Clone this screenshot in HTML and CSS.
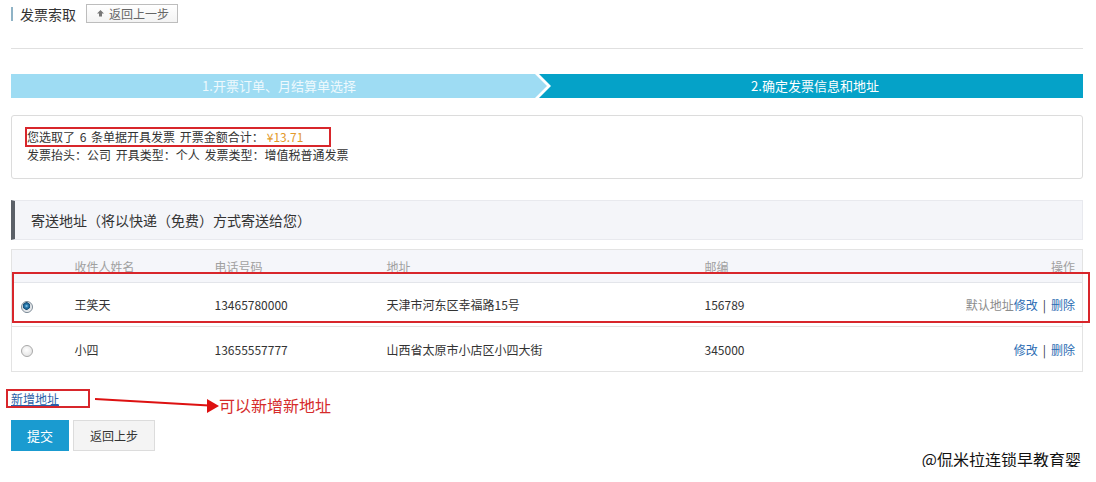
FILE: index.html
```html
<!DOCTYPE html>
<html lang="zh-CN">
<head>
    <meta charset="UTF-8">
    <title>发票索取</title>
    <link rel="stylesheet" href="styles.css">
</head>
<body>
    <div class="page">
        <div class="page-head">
            <span class="head-mark"></span>
            <h2 class="head-title">发票索取</h2>
            <a href="javascript:;" class="head-back">
                <svg width="9" height="9" viewBox="0 0 9 9"><path d="M4.5 1 L1 4.5 H3 V7.5 H6 V4.5 H8 Z" fill="#777"/></svg>
                返回上一步
            </a>
        </div>
        <div class="line"></div>

        <!-- 步骤条 -->
        <div class="steps">
            <div class="step step-done">1.开票订单、月结算单选择</div>
            <div class="step step-on">2.确定发票信息和地址</div>
        </div>

        <div class="info">
            <div class="info-line"><span class="mark">您选取了 6 条单据开具发票 开票金额合计：<em class="money">¥13.71</em></span></div>
            <div class="info-line">发票抬头：公司 开具类型：个人 发票类型：增值税普通发票</div>
        </div>

        <div class="sec-title">寄送地址（将以快递（免费）方式寄送给您）</div>

        <div class="addr-wrap">
            <table class="addr-table">
                <colgroup>
                    <col style="width:63px">
                    <col style="width:140px">
                    <col style="width:172px">
                    <col style="width:318px">
                    <col style="width:200px">
                    <col>
                </colgroup>
                <thead>
                    <tr>
                        <th></th>
                        <th>收件人姓名</th>
                        <th>电话号码</th>
                        <th>地址</th>
                        <th>邮编</th>
                        <th class="op">操作</th>
                    </tr>
                </thead>
                <tbody>
                    <tr>
                        <td><span class="radio checked"></span></td>
                        <td>王笑天</td>
                        <td>13465780000</td>
                        <td>天津市河东区幸福路15号</td>
                        <td>156789</td>
                        <td class="op"><span class="def">默认地址</span><a href="javascript:;">修改</a><span class="sep">|</span><a href="javascript:;">删除</a></td>
                    </tr>
                    <tr>
                        <td><span class="radio"></span></td>
                        <td>小四</td>
                        <td>13655557777</td>
                        <td>山西省太原市小店区小四大街</td>
                        <td>345000</td>
                        <td class="op"><a href="javascript:;">修改</a><span class="sep">|</span><a href="javascript:;">删除</a></td>
                    </tr>
                </tbody>
            </table>
            <div class="row-mark"></div>
        </div>

        <div class="add-row">
            <span class="add-box"><a href="javascript:;" class="add-link">新增地址</a></span>
            <svg class="add-arrow" width="124" height="26" viewBox="0 0 124 26">
                <line x1="0" y1="10" x2="114" y2="16.5" stroke="#d11" stroke-width="2"/>
                <path d="M112 10 L124 17 L112 24 Z" fill="#d11"/>
            </svg>
            <span class="add-tip">可以新增新地址</span>
        </div>

        <div class="btns">
            <a href="javascript:;" class="btn btn-blue">提交</a>
            <a href="javascript:;" class="btn btn-gray">返回上步</a>
        </div>
        <div class="sign">@侃米拉连锁早教育婴</div>
    </div>
</body>
</html>
```

FILE: styles.css
```css
* {
    margin: 0;
    padding: 0;
    box-sizing: border-box;
}

body {
    font-family: "Noto Sans CJK SC", "Liberation Sans", sans-serif;
    font-size: 12px;
    color: #333;
    background: #fff;
}

a {
    text-decoration: none;
    color: #2b6cb3;
}

em {
    font-style: normal;
}

.page {
    padding: 0 13px 0 11px;
}

.page-head {
    display: flex;
    align-items: center;
    height: 27px;
}

.head-mark {
    width: 2px;
    height: 14px;
    background-color: #8fb3c6;
}

.head-title {
    margin-left: 7px;
    font-size: 14px;
    font-weight: normal;
    line-height: 20px;
    color: #333;
}

.head-back {
    display: flex;
    align-items: center;
    gap: 4px;
    margin-left: 10px;
    width: 92px;
    height: 19px;
    padding-left: 9px;
    border: 1px solid #bdbdbd;
    background: linear-gradient(#fff, #f3f3f3);
    color: #666;
    line-height: 17px;
}

.line {
    margin-top: 21px;
    height: 1px;
    background-color: #e0e0e0;
}

/* 步骤条 */
.steps {
    display: flex;
    margin-top: 25px;
    height: 24px;
    line-height: 24px;
    font-size: 13px;
    text-align: center;
}

.step {
    position: relative;
}

.step-done {
    width: 524px;
    padding-left: 12px;
    background-color: #9edcf3;
    color: #eef9fd;
    z-index: 1;
}

.step-done::before,
.step-done::after {
    content: "";
    position: absolute;
    top: 0;
    left: 100%;
    height: 24px;
}

.step-done::before {
    width: 16px;
    background-color: #fff;
    clip-path: polygon(0 0, 4px 0, 16px 50%, 4px 100%, 0 100%);
}

.step-done::after {
    width: 12px;
    background-color: #9edcf3;
    clip-path: polygon(0 0, 12px 50%, 0 100%);
}

.step-on {
    flex: 1;
    background-color: #05a2c8;
    color: #fff;
    padding-left: 12px;
}

.info {
    margin-top: 17px;
    padding: 12px 15px 14px;
    border: 1px solid #dcdcdc;
    border-radius: 3px;
    line-height: 18px;
    word-spacing: 2px;
}

.info-line {
    height: 18px;
}

.mark {
    display: inline-block;
    vertical-align: top;
    line-height: 16px;
    margin: -1px 0 -1px -2px;
    padding-right: 26px;
    border: 2px solid #d8262b;
}

.money {
    color: #e39a2a;
    margin-left: 3px;
}

.sec-title {
    margin-top: 21px;
    height: 40px;
    line-height: 38px;
    padding-left: 16px;
    font-size: 14px;
    background-color: #f4f5f9;
    border: 1px solid #e8e9ee;
    border-left: 4px solid #5b6068;
}

.addr-wrap {
    position: relative;
    margin-top: 9px;
}

.addr-table {
    width: 100%;
    table-layout: fixed;
    border-collapse: collapse;
    border: 1px solid #e3e3e3;
}

.addr-table th {
    height: 33px;
    text-align: left;
    font-weight: normal;
    color: #a0a0a0;
    background-color: #f5f6fa;
    border-bottom: 1px solid #e3e5ea;
}

.addr-table td {
    height: 45px;
    border-bottom: 1px solid #e3e3e3;
}

.addr-table tbody tr:first-child td {
    height: 44px;
}

.addr-table td:first-child {
    padding-left: 9px;
}

.addr-table .op {
    text-align: right;
    padding-right: 7px;
}

.def {
    color: #8c8c8c;
}

.sep {
    padding: 0 5px;
    color: #333;
}

.radio {
    display: inline-block;
    vertical-align: middle;
    width: 12px;
    height: 12px;
    border-radius: 50%;
    border: 1px solid #a9a9a9;
    background: radial-gradient(circle at 45% 40%, #fff 0, #e4e4e4 80%);
}

.radio.checked {
    border-color: #7d8b97;
    background: radial-gradient(circle at 45% 40%, #9fd4f0 0, #2b7fb4 1.5px, #164f78 3.5px, #d8dde2 4px, #f4f4f4 6px);
}

/* 标注框 */
.row-mark {
    position: absolute;
    left: 1px;
    top: 23px;
    width: 1078px;
    height: 51px;
    border: 2px solid #d8262b;
    pointer-events: none;
}

.add-row {
    display: flex;
    align-items: flex-start;
    margin-top: 17px;
}

.add-box {
    display: block;
    width: 84px;
    height: 19px;
    margin-left: -5px;
    padding-left: 3px;
    border: 2px solid #d8262b;
    line-height: 15px;
}

.add-link {
    color: #2b5fa8;
    text-decoration: underline;
}

.add-arrow {
    margin-left: 5px;
}

.add-tip {
    margin-top: 6px;
    font-size: 16px;
    line-height: 20px;
    color: #d52b2b;
}

.btns {
    display: flex;
    gap: 4px;
    margin-top: 5px;
}

.btn {
    display: block;
    height: 31px;
    line-height: 31px;
    text-align: center;
}

.btn-blue {
    width: 58px;
    background-color: #1a9bd0;
    color: #fff;
    font-size: 13px;
}

.btn-gray {
    width: 82px;
    background-color: #f4f4f4;
    border: 1px solid #dcdcdc;
    line-height: 29px;
    color: #333;
}

.sign {
    text-align: right;
    padding-right: 2px;
    font-size: 16px;
    line-height: 16px;
    color: #111;
}
```
